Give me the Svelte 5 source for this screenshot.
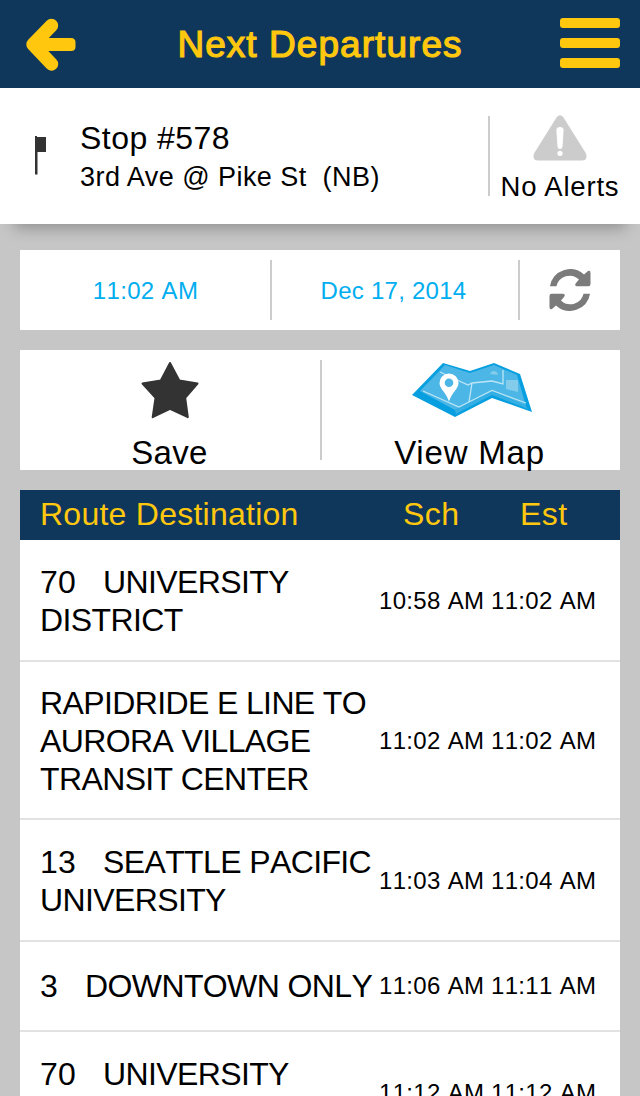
<script>
  const departures = [
    { num: '70', lines: ['UNIVERSITY', 'DISTRICT'], sch: '10:58 AM', est: '11:02 AM' },
    { num: '', lines: ['RAPIDRIDE E LINE TO', 'AURORA VILLAGE', 'TRANSIT CENTER'], sch: '11:02 AM', est: '11:02 AM' },
    { num: '13', lines: ['SEATTLE PACIFIC', 'UNIVERSITY'], sch: '11:03 AM', est: '11:04 AM' },
    { num: '3', lines: ['DOWNTOWN ONLY'], sch: '11:06 AM', est: '11:11 AM' },
    { num: '70', lines: ['UNIVERSITY', 'DISTRICT'], sch: '11:12 AM', est: '11:12 AM' }
  ];
</script>

<div class="screen">
  <header class="bar">
    <svg class="back" width="52" height="54" viewBox="0 0 52 54" aria-hidden="true">
      <path d="M26.500 7.500 8 26.500 26.500 46" fill="none" stroke="#ffc80f" stroke-width="13.400" stroke-linecap="round" stroke-linejoin="round" />
      <path d="M10 20H46Q50.500 20 50.500 24.500V28.500Q50.500 33 46 33H10Z" fill="#ffc80f" />
    </svg>
    <h1>Next Departures</h1>
    <div class="burger"><i></i><i></i><i></i></div>
  </header>

  <section class="stop">
    <svg class="flag" width="11" height="39" viewBox="0 0 11 39" aria-hidden="true">
      <path d="M0 0H2V1H11V16H2.500V38.500H0Z" fill="#333" />
    </svg>
    <div class="where">
      <div class="num">Stop #578</div>
      <div class="addr">3rd Ave @ Pike St&nbsp; (NB)</div>
    </div>
    <div class="alerts">
      <svg width="54" height="46" viewBox="0 0 54 46" aria-hidden="true">
        <path d="M23.500 2.500Q27-2 30.500 2.500L53 38.500Q55 45 49 45.500H5Q-1 45 1 38.500Z" fill="#ccc" />
        <path d="M23.400 15Q23.500 12 27 12T30.600 15L29.500 32Q29 34 27 34T24.500 32Z" fill="#fff" />
        <circle cx="27" cy="38.300" r="2.600" fill="#fff" />
      </svg>
      <span>No Alerts</span>
    </div>
  </section>

  <main>
    <section class="when">
      <span class="time">11:02 AM</span>
      <span class="date">Dec 17, 2014</span>
      <span class="refresh">
        <svg width="42" height="42" viewBox="0 0 42 42" aria-hidden="true">
          <g fill="#7b7b7b">
            <path d="M1 17A20.500 20.500 0 0 1 35 5.500L39 2Q41.500 1 41.500 4V15Q41.500 17.300 39.500 17.300H28Q25 17 27 14L30 10.500A13.500 13.500 0 0 0 7.500 17.300H1Z" />
            <path transform="rotate(180 21 21)" d="M1 17A20.500 20.500 0 0 1 35 5.500L39 2Q41.500 1 41.500 4V15Q41.500 17.300 39.500 17.300H28Q25 17 27 14L30 10.500A13.500 13.500 0 0 0 7.500 17.300H1Z" />
          </g>
        </svg>
      </span>
    </section>

    <section class="actions">
      <div class="action save">
        <svg width="58" height="58" viewBox="0 0 58 58" aria-hidden="true">
          <path d="M29 2 38.300 19.500 56.500 22.600 44.200 36.800 46.800 56.200 29 47.800 11.700 56.200 14.500 36.800 1.500 22.600 19.800 19.500Z" fill="#333" stroke="#333" stroke-width="2" stroke-linejoin="round" />
        </svg>
        <span>Save</span>
      </div>
      <div class="action map">
        <svg width="120" height="54" viewBox="0 0 120 54" aria-hidden="true">
          <path d="M31 0 58 8 82 0 108 11 120 49 80 35 43 54 0 32Z" fill="#079fdf" />
          <path d="M33 2 58 10 82 2 105 12 114 43 80 28 43 47 8 28Z" fill="#4cb7e6" />
          <path d="M80 28 114 43 116 46 80 32 44 51 43 47Z" fill="#35aee3" />
          <path d="M11 28 47 44 57 39 80 27.500 114 40M28 9 56 22 60 20 80 18 91 21V7M60 20 57 39" fill="none" stroke="#bce5f6" stroke-width="1.300" />
          <path d="M94 17H106V29L94 26ZM78 11Q79 8 82 8T86 12Z" fill="#84ccec" />
          <path fill-rule="evenodd" d="M37 38.500C34 29 27.500 26 27.500 20A9.500 9.500 0 0 1 46.500 20C46.500 26 40 29 37 38.500ZM37 15.500A4.300 4.300 0 1 0 37 24.100 4.300 4.300 0 1 0 37 15.500Z" fill="#fff" />
        </svg>
        <span>View Map</span>
      </div>
    </section>

    <section class="table">
      <div class="head">
        <span class="route">Route Destination</span>
        <span class="sch">Sch</span>
        <span class="est">Est</span>
      </div>
      {#each departures as d}
        <div class="row" class:tall={d.lines.length === 3} class:single={d.lines.length === 1}>
          <div class="dest">
            {#each d.lines as line, i}
              <div>{#if i === 0 && d.num}<span class="no">{d.num}&nbsp;&nbsp;&nbsp;</span>{/if}{line}</div>
            {/each}
          </div>
          <span class="t">{d.sch}</span>
          <span class="t">{d.est}</span>
        </div>
      {/each}
    </section>
  </main>
</div>

<style>
  :global(body) { margin: 0; overflow: hidden; }
  .screen {
    width: 640px; height: 1096px; overflow: hidden; background: #c6c6c6; color: #000;
    font-family: "Liberation Sans", Arial, sans-serif; white-space: nowrap;
  }
  .bar {
    box-sizing: border-box; height: 88px; padding: 0 20px 0 25px; background: #0f375c; color: #ffc80f;
    display: grid; grid-template-columns: 60px 1fr 60px; align-items: center;
  }
  .back { margin-top: 2px; }
  h1 { margin: 2px 5px 0 0; text-align: center; font-size: 37px; line-height: 44px; font-weight: 400; letter-spacing: 1.05px; -webkit-text-stroke: 1.2px #ffc80f; }
  .burger { display: flex; flex-direction: column; gap: 10px; margin-bottom: 2px; }
  .burger i { height: 10px; border-radius: 3px; background: #ffc80f; }
  .stop {
    box-sizing: border-box; height: 136px; padding: 28px 20px 28px 35px; background: #fff; display: flex;
    box-shadow: 0 18px 14px -14px rgba(0, 0, 0, .28);
  }
  .flag { margin: 20px 34px 0 0; }
  .where { flex: 1; }
  .num { font-size: 32px; line-height: 38px; margin-top: 3px; letter-spacing: .45px; }
  .addr { font-size: 27px; line-height: 38px; letter-spacing: .45px; padding-top: 1px; }
  .alerts {
    box-sizing: border-box; width: 132px; height: 80px; border-left: 2px solid #ccc; padding-left: 10px;
    display: flex; flex-direction: column; align-items: center; font-size: 27.5px; line-height: 32px; letter-spacing: .8px;
  }
  .alerts svg { margin: -1px 0 10px; flex: none; }
  main { padding: 26px 20px 0; display: flex; flex-direction: column; gap: 20px; }
  .when { height: 80px; background: #fff; display: grid; grid-template-columns: 250px 248px 102px; align-items: center; color: #00aeef; font-size: 24px; text-align: center; }
  .when span { height: 60px; line-height: 62px; }
  .when .time { letter-spacing: .35px; font-kerning: none; padding-left: 1px; }
  .when .date { letter-spacing: .25px; padding-right: 3px; }
  .date, .refresh { border-left: 2px solid #ccc; }
  .when .refresh { display: flex; align-items: center; justify-content: center; padding-right: 1px; }
  .actions { height: 120px; background: #fff; display: grid; grid-template-columns: 300px 300px; align-items: center; }
  .action { height: 100px; display: flex; flex-direction: column; align-items: center; font-size: 33px; line-height: 38px; letter-spacing: .3px; }
  .action svg { flex: none; }
  .save span { padding-right: 1px; }
  .save svg { margin: 1px 0 15px; }
  .map { border-left: 2px solid #ccc; box-sizing: border-box; letter-spacing: .8px; padding-right: 3px; }
  .map svg { margin: 3px 0 17px 5px; }
  .head { height: 50px; background: #0f375c; color: #ffc80f; display: grid; grid-template-columns: 363px 117px 1fr; padding-left: 20px; font-size: 32px; line-height: 48px; letter-spacing: .25px; }
  .sch, .est { letter-spacing: .4px; }
  .table { background: #fff; }
  .row { box-sizing: border-box; min-height: 90px; padding: 23px 0 21px 20px; border-bottom: 2px solid #e2e2e2; display: grid; grid-template-columns: 339px 112px 1fr; align-items: center; }
  .row.tall { padding-top: 22px; padding-bottom: 20px; }
  .row.single { padding-top: 22px; padding-bottom: 22px; }
  .dest { font-size: 32px; line-height: 38px; letter-spacing: -.62px; font-kerning: none; }
  .no { letter-spacing: .15px; }
  .t { font-size: 24px; line-height: 30px; letter-spacing: .33px; font-kerning: none; }
</style>
